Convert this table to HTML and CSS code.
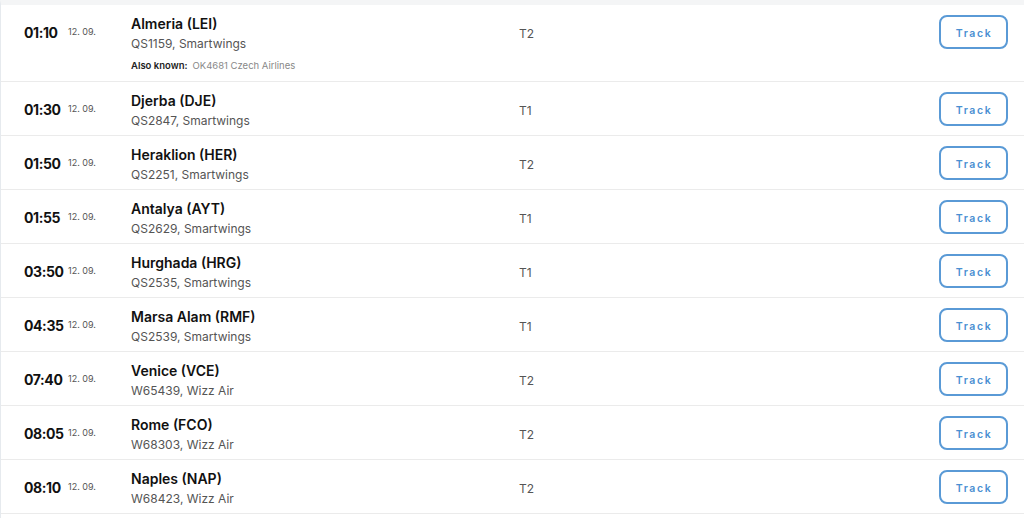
FILE: index.html
```html
<!DOCTYPE html>
<html lang="en">
<head>
<meta charset="utf-8">
<title>Departures</title>
<link rel="stylesheet" href="styles.css">
</head>
<body>
<div class="board">
  <div class="row">
    <div class="when"><span class="time">01:10</span><span class="date">12. 09.</span></div>
    <div class="info">
      <div class="dest">Almeria (LEI)</div><div class="flight">QS1159, Smartwings</div>
      <div class="also"><span class="also-label">Also known:</span><span class="also-val">OK4681 Czech Airlines</span></div>
    </div>
    <div class="term">T2</div>
    <div class="act"><button class="track">Track</button></div>
  </div>
  <div class="row">
    <div class="when"><span class="time">01:30</span><span class="date">12. 09.</span></div>
    <div class="info"><div class="dest">Djerba (DJE)</div><div class="flight">QS2847, Smartwings</div></div>
    <div class="term">T1</div><div class="act"><button class="track">Track</button></div>
  </div>
  <div class="row">
    <div class="when"><span class="time">01:50</span><span class="date">12. 09.</span></div>
    <div class="info"><div class="dest">Heraklion (HER)</div><div class="flight">QS2251, Smartwings</div></div>
    <div class="term">T2</div><div class="act"><button class="track">Track</button></div>
  </div>
  <div class="row">
    <div class="when"><span class="time">01:55</span><span class="date">12. 09.</span></div>
    <div class="info"><div class="dest">Antalya (AYT)</div><div class="flight">QS2629, Smartwings</div></div>
    <div class="term">T1</div><div class="act"><button class="track">Track</button></div>
  </div>
  <div class="row">
    <div class="when"><span class="time">03:50</span><span class="date">12. 09.</span></div>
    <div class="info"><div class="dest">Hurghada (HRG)</div><div class="flight">QS2535, Smartwings</div></div>
    <div class="term">T1</div><div class="act"><button class="track">Track</button></div>
  </div>
  <div class="row">
    <div class="when"><span class="time">04:35</span><span class="date">12. 09.</span></div>
    <div class="info"><div class="dest">Marsa Alam (RMF)</div><div class="flight">QS2539, Smartwings</div></div>
    <div class="term">T1</div><div class="act"><button class="track">Track</button></div>
  </div>
  <div class="row">
    <div class="when"><span class="time">07:40</span><span class="date">12. 09.</span></div>
    <div class="info"><div class="dest">Venice (VCE)</div><div class="flight">W65439, Wizz Air</div></div>
    <div class="term">T2</div><div class="act"><button class="track">Track</button></div>
  </div>
  <div class="row">
    <div class="when"><span class="time">08:05</span><span class="date">12. 09.</span></div>
    <div class="info"><div class="dest">Rome (FCO)</div><div class="flight">W68303, Wizz Air</div></div>
    <div class="term">T2</div><div class="act"><button class="track">Track</button></div>
  </div>
  <div class="row">
    <div class="when"><span class="time">08:10</span><span class="date">12. 09.</span></div>
    <div class="info"><div class="dest">Naples (NAP)</div><div class="flight">W68423, Wizz Air</div></div>
    <div class="term">T2</div><div class="act"><button class="track">Track</button></div>
  </div>
</div>
</body>
</html>
```
FILE: styles.css
```css
html, body {
  margin: 0;
  padding: 0;
  background: #fff;
}
body {
  font-family: "Inter", "Noto Sans", sans-serif;
  color: #111;
}
.board {
  border-left: 1px solid #e6eaee;
  border-top: 4px solid #f4f5f6;
  min-height: 514px;
}
.row {
  display: flex;
  align-items: flex-start;
  padding: 0 16px 0 23px;
  border-top: 1px solid #ebebeb;
}
.row:first-child {
  border-top: 1px solid #f4f5f6;
}
.row:last-child {
  border-bottom: 1px solid #ebebeb;
}
.when {
  width: 107px;
  height: 53px;
  display: flex;
  align-items: center;
  padding-top: 2px;
  box-sizing: border-box;
}
.time {
  width: 44px;
  font-size: 14px;
  font-weight: 700;
  letter-spacing: -0.4px;
  color: #111;
}
.date {
  font-size: 9px;
  color: #555;
  position: relative;
  top: -1px;
}
.info {
  width: 388px;
  padding: 10px 0 4px;
}
.dest {
  font-size: 14px;
  font-weight: 600;
  line-height: 18px;
  color: #111;
}
.flight {
  font-size: 12px;
  line-height: 21px;
  color: #555;
}
.also {
  margin-top: 5px;
  margin-bottom: 4px;
  font-size: 9.5px;
  line-height: 14px;
}
.also-label {
  font-weight: 600;
  color: #222;
}
.also-val {
  color: #888;
  margin-left: 5px;
}
.term {
  flex: 1;
  height: 53px;
  display: flex;
  align-items: center;
  padding-top: 3px;
  box-sizing: border-box;
  font-size: 12px;
  color: #555;
}
.act {
  height: 53px;
  display: flex;
  align-items: center;
}
.track {
  width: 69px;
  height: 34px;
  border: 2px solid #5a9ad6;
  border-radius: 8px;
  background: #fff;
  color: #4a8fd2;
  font-family: inherit;
  font-size: 10.5px;
  font-weight: 600;
  letter-spacing: 1.6px;
  padding: 3px 0 0 1px;
}
```
